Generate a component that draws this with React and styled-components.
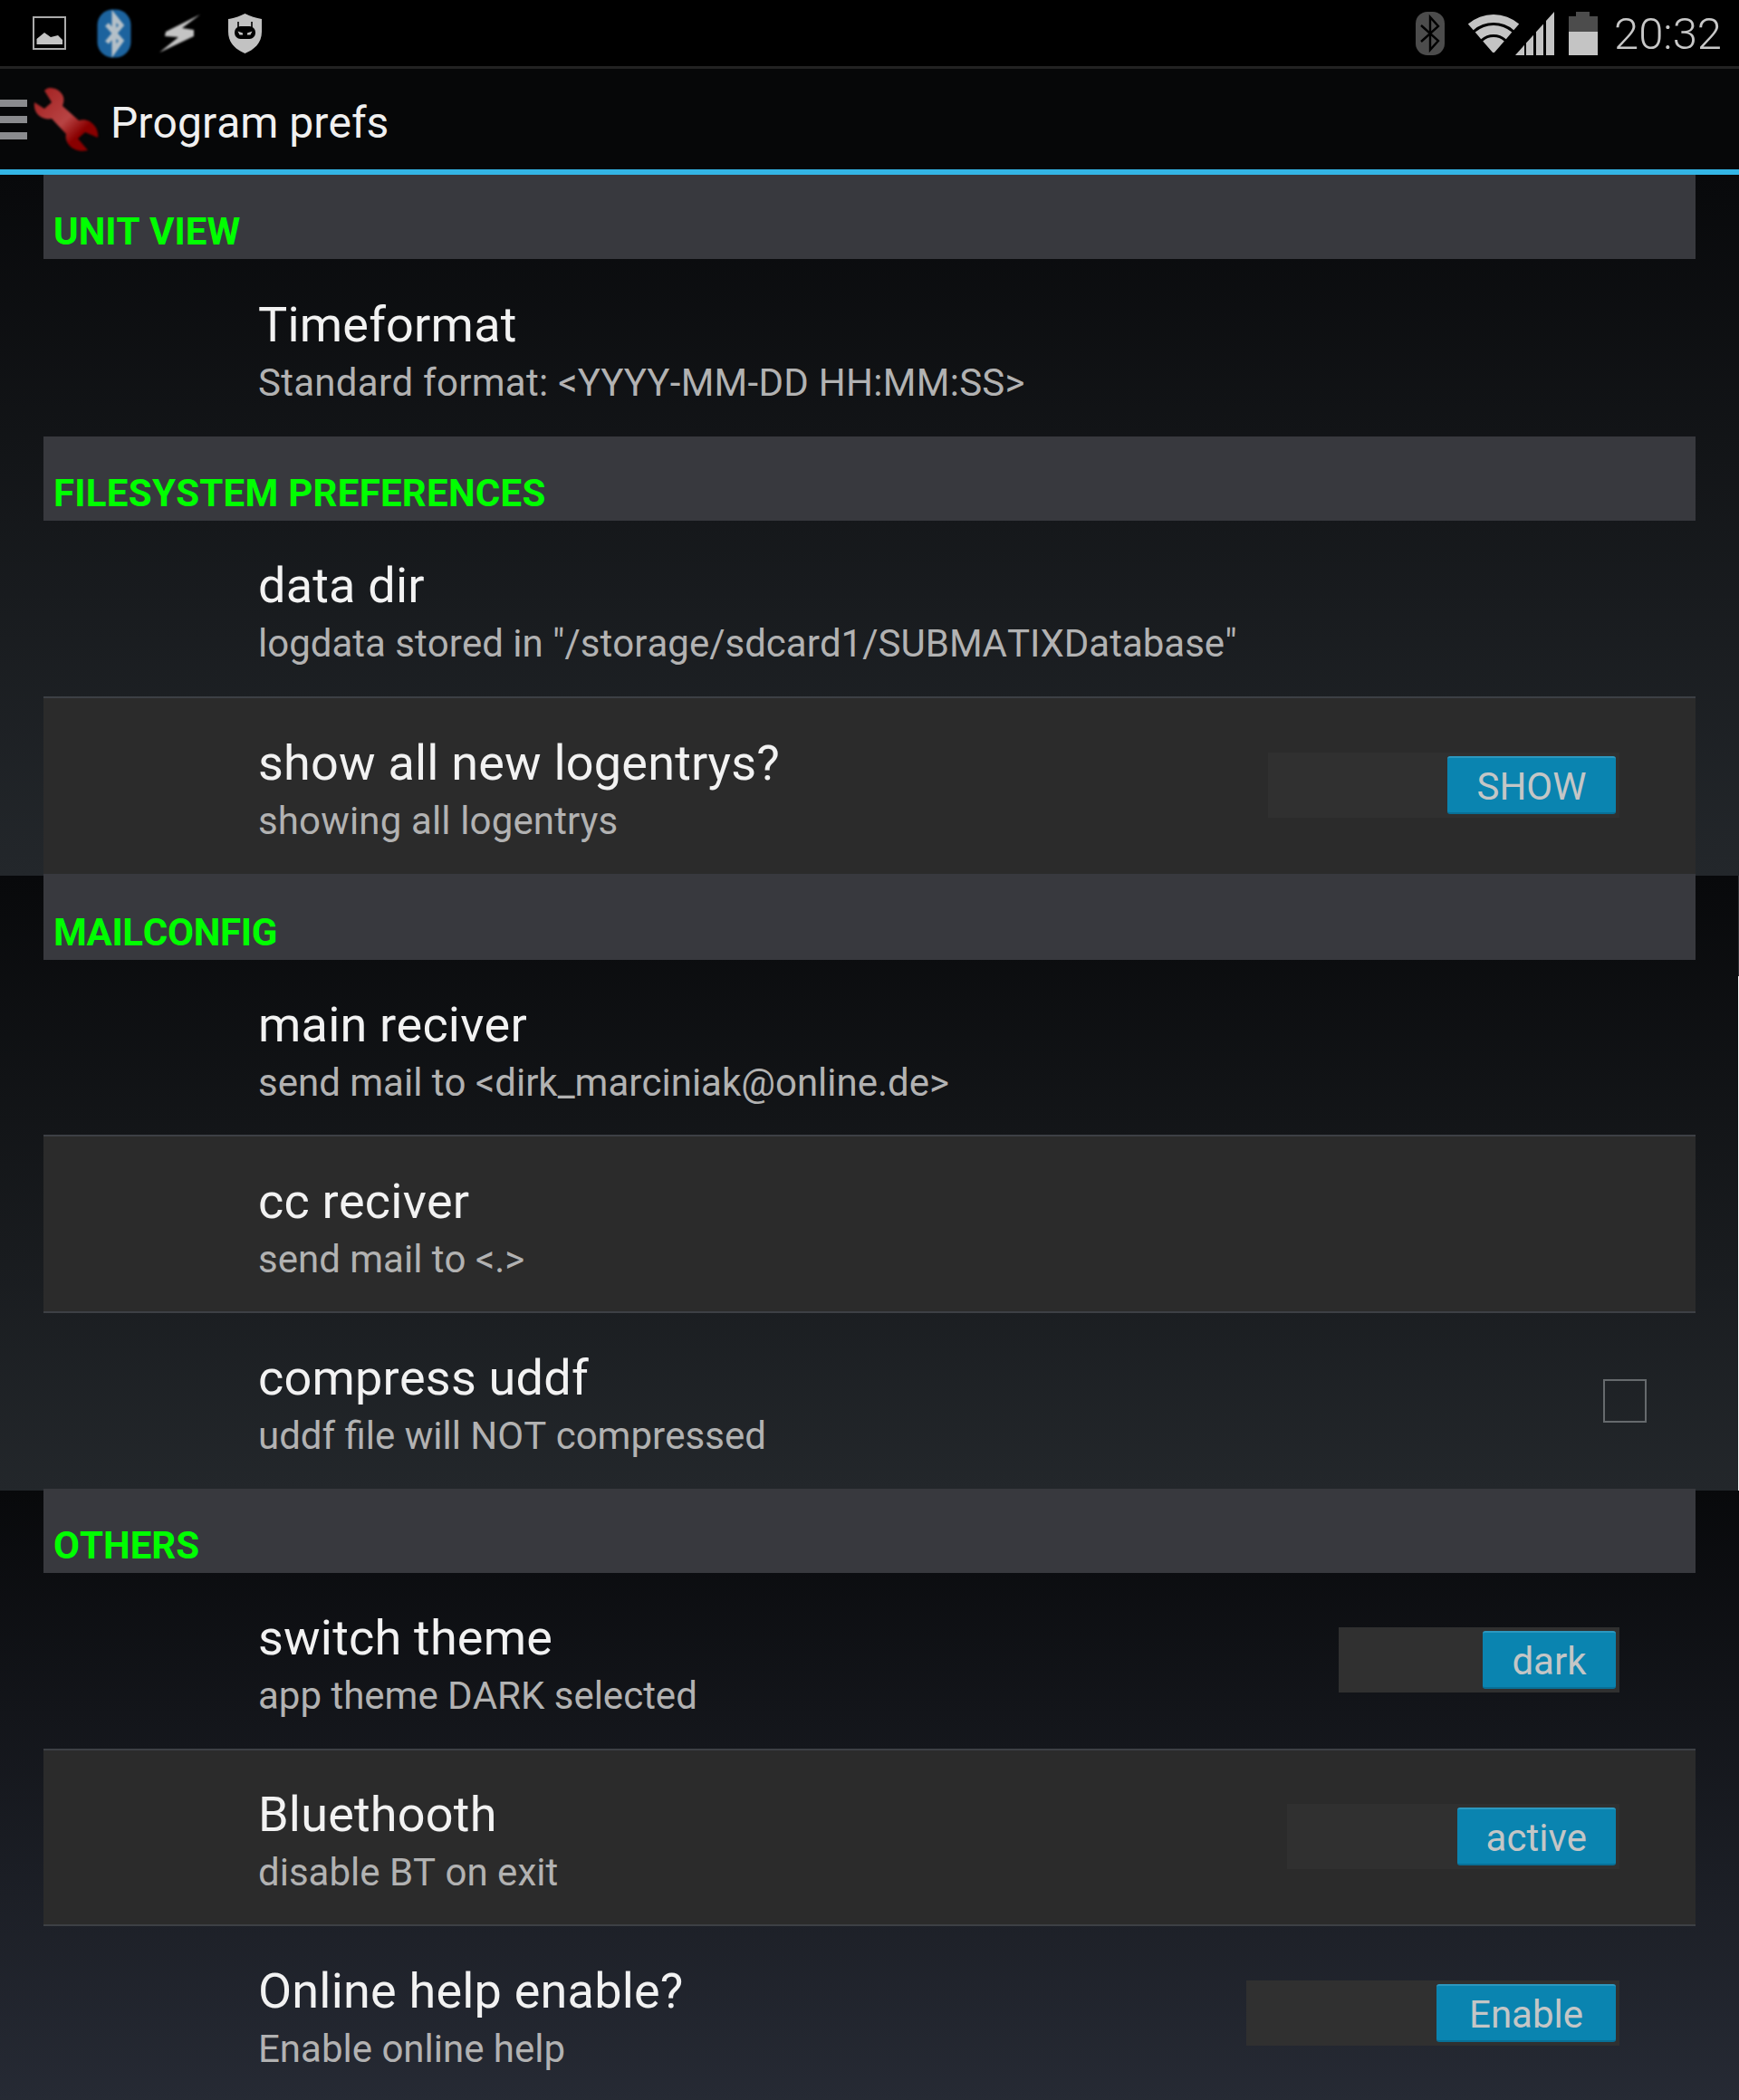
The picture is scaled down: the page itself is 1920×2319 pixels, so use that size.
import React from 'react';
import styled, { createGlobalStyle } from 'styled-components';

const GlobalStyle = createGlobalStyle`
  html, body {
    margin: 0;
    padding: 0;
    background: #000;
  }
  body {
    font-family: Roboto, "Liberation Sans", sans-serif;
    font-kerning: none;
  }
`;

const Page = styled.div`
  width: 1920px;
  height: 2319px;
  overflow: hidden;
  display: flex;
  flex-direction: column;
`;

const StatusBar = styled.div`
  height: 73px;
  background: #000;
  border-bottom: 3px solid #222;
  display: flex;
  align-items: center;
  justify-content: space-between;
  padding: 0 19px 0 18px;
`;

const StatusLeft = styled.div`
  display: flex;
  align-items: center;
`;

const StatusSlot = styled.div`
  width: 72px;
  display: flex;
  justify-content: center;
`;

const StatusRight = styled.div`
  display: flex;
  align-items: center;
`;

const Clock = styled.span`
  margin-left: 18px;
  padding-top: 2px;
  font-size: 49px;
  font-weight: 300;
  color: #c8c8c8;
  line-height: 71px;
`;

const SoftSvg = styled.svg`
  display: block;
  flex: none;
  margin-left: ${p => p.$ml || 0}px;
  filter: ${p => (p.$soft ? `blur(${p.$soft}px)` : 'none')};
`;

const ActionBar = styled.div`
  height: 111px;
  background: #060708;
  border-bottom: 6px solid #33b5e5;
  display: flex;
  align-items: center;
`;

const MenuLines = styled.div`
  width: 30px;
  display: flex;
  flex-direction: column;
  gap: 10px;
  margin-right: 7px;

  span {
    display: block;
    height: 8px;
    background: #8a8b8e;
  }
`;

const ActionTitle = styled.h1`
  margin: 7px 0 0 13px;
  font-size: 48px;
  font-weight: 400;
  color: #f0f0f0;
`;

const Section = styled.section`
  position: relative;
  height: ${p => p.$height}px;
  padding: 0 48px;
  flex: none;
  background: linear-gradient(180deg, #08090b 0%, ${p => p.$end} 100%);

  /* thin leftover strip on the right edge of the capture */
  ${p => p.$edge && `
    &::before {
      content: '';
      position: absolute;
      top: 0;
      right: 0;
      width: 1px;
      height: 111px;
      background: #34363a;
    }
    &::after {
      content: '';
      position: absolute;
      top: 111px;
      right: 0;
      bottom: 0;
      width: 1px;
      background: #f4f4f4;
    }
  `}
`;

const SectionHead = styled.div`
  height: ${p => p.$height || 93}px;
  margin-top: ${p => p.$pull || 0}px;
  box-sizing: border-box;
  background: #38393e;
  padding: 0 0 5px 11px;
  display: flex;
  align-items: flex-end;
  font-size: 42px;
  font-weight: 700;
  line-height: 50px;
  letter-spacing: ${p => p.$track || 0}px;
  color: #00ff00;
`;

const Row = styled.div`
  height: ${p => p.$height || 194}px;
  display: flex;
  align-items: center;
  justify-content: space-between;
  padding: 0 ${p => p.$right}px 0 237px;
  background: ${p => (p.$shaded ? '#2b2b2b' : 'transparent')};
`;

const Divider = styled.div`
  height: 2px;
  background: #3d4045;
`;

const RowText = styled.div`
  display: flex;
  flex-direction: column;
  padding-top: 7px;
`;

const RowTitle = styled.div`
  font-size: 54px;
  line-height: 64px;
  letter-spacing: 0.2px;
  color: #f2f2f2;
`;

const RowSummary = styled.div`
  margin-top: 7px;
  font-size: 42px;
  line-height: 50px;
  letter-spacing: ${p => p.$track || 0}px;
  color: #b2b2b2;
`;

const Track = styled.div`
  display: inline-grid;
  grid-template-columns: 1fr 1fr;
  column-gap: 8px;
  padding: 4px;
  margin-bottom: 2px;
  background: #303030;
`;

const Thumb = styled.div`
  grid-column: 2;
  height: 64px;
  box-sizing: border-box;
  padding: 0 ${p => p.$pad || 32.5}px;
  border-radius: 3px;
  border-top: 2px solid #2c98c0;
  border-bottom: 2px solid #086f96;
  background: #0a84b0;
  color: #c4c6c6;
  font-size: 42px;
  line-height: 63px;
  text-align: center;
  white-space: nowrap;
`;

const Check = styled.div`
  width: 48px;
  height: 48px;
  box-sizing: border-box;
  border: 2px solid #666a6d;
`;

// small helper for the wifi fan, tip at (29, 46)
const fan = (outer, inner) => {
  const a = (41 * Math.PI) / 180;
  const pt = r => [(r * Math.sin(a)).toFixed(1), (r * Math.cos(a)).toFixed(1)];
  const [ox, oy] = pt(outer);
  const [ix, iy] = pt(inner);
  return `M${29 - ox} ${46 - oy}A${outer} ${outer} 0 0 1 ${29 + +ox} ${46 - oy}L${29 + +ix} ${46 - iy}A${inner} ${inner} 0 0 0 ${29 - ix} ${46 - iy}Z`;
};

const PictureIcon = () => (
  <SoftSvg width="37" height="37" viewBox="0 0 37 37">
    <rect x="1" y="1" width="35" height="35" fill="none" stroke="#ababab" strokeWidth="2" />
    <path d="M4.5 31V25L13 18L20 23L28 21L33 26V31Z" fill="#c4c4c4" />
  </SoftSvg>
);

const BlueToothBadge = () => (
  <SoftSvg width="38" height="54" viewBox="0 0 38 54" $soft="1">
    <rect x="0.5" y="0.5" width="37" height="53" rx="17" fill="#1c639e" />
    <path d="M11 17L27 35L19 46V8L27 18L11 37" fill="none" stroke="#b4c0c8" strokeWidth="5" />
  </SoftSvg>
);

const BoltIcon = () => (
  <SoftSvg width="46" height="42" viewBox="0 0 46 42" $soft="0.9">
    <path d="M46 0L8 19L7 24L22 25L1 42L39 24L39 17L26 15Z" fill="#c4c4c4" />
  </SoftSvg>
);

const ShieldIcon = () => (
  <SoftSvg width="37" height="44" viewBox="0 0 37 44">
    <path d="M18.5 0C24 3 31 5 37 6V20C37 33 28 40 18.5 44C9 40 0 33 0 20V6C6 5 13 3 18.5 0Z" fill="#c2c2c2" />
    <path d="M11 9V15M26 9V15" stroke="#000" strokeWidth="1.6" />
    <rect x="7" y="14" width="23" height="14" rx="6.5" fill="#000" />
    <path d="M10.5 19.5L16 21.5V23.5H12.5ZM26.5 19.5L21 21.5V23.5H24.5Z" fill="#c2c2c2" />
  </SoftSvg>
);

const GreyBluetooth = () => (
  <SoftSvg width="32" height="48" viewBox="0 0 32 48">
    <rect width="32" height="48" rx="13" fill="#4c4c4c" />
    <path d="M6 15L25 32L16 42V6L25 16L6 33" fill="none" stroke="#000" strokeWidth="2.4" />
  </SoftSvg>
);

const WifiSignal = () => (
  <SoftSvg width="96" height="48" viewBox="0 0 96 48" $ml={25}>
    <path d={fan(43, 34)} fill="#c4c4c4" />
    <path d={fan(31, 21)} fill="#c4c4c4" />
    <path d={fan(18, 1)} fill="#c4c4c4" />
    <path d="M53 48L63 36.8V48ZM65 34.6L73 25.7V48H65ZM76 22.3L84 13.4V48H76ZM87 10L96 0V48H87Z" fill="#c4c4c4" />
  </SoftSvg>
);

const Battery = () => (
  <SoftSvg width="32" height="48" viewBox="0 0 32 48" $ml={16}>
    <path d="M8 0H23V5H32V22H0V5H8Z" fill="#4c4c4c" />
    <rect y="22" width="32" height="26" fill="#c4c4c4" />
  </SoftSvg>
);

const WrenchIcon = () => (
  <SoftSvg width="72" height="72" viewBox="0 0 72 72" $soft="1">
    <defs>
      <linearGradient id="wrenchFill" x1="0" y1="0" x2="1" y2="1">
        <stop offset="0" stopColor="#a01c1c" />
        <stop offset="0.5" stopColor="#b84444" />
        <stop offset="0.72" stopColor="#8a0000" />
        <stop offset="1" stopColor="#860000" />
      </linearGradient>
    </defs>
    <path
      d="M18 1C25 1 31 5 33 11C34 15 33 18 32 21L50 37C54 36 58 36 62 38C68 42 72 48 71 56L57 50L49 57L60 70C52 72 44 70 39 64C36 60 35 56 36 52L20 35C16 36 11 35 8 33C3 30 0 24 1 17L12 24L20 17L12 4C14 2 16 1 18 1Z"
      fill="url(#wrenchFill)"
    />
  </SoftSvg>
);

const Setting = ({ title, summary, track, shaded, height, right, children }) => (
  <Row $shaded={shaded} $height={height} $right={right || 84}>
    <RowText>
      <RowTitle>{title}</RowTitle>
      <RowSummary $track={track}>{summary}</RowSummary>
    </RowText>
    {children}
  </Row>
);

const Toggle = ({ label, pad }) => (
  <Track>
    <Thumb $pad={pad}>{label}</Thumb>
  </Track>
);

export default function App() {
  return (
    <Page>
      <GlobalStyle />
      <StatusBar>
        <StatusLeft>
          <StatusSlot><PictureIcon /></StatusSlot>
          <StatusSlot><BlueToothBadge /></StatusSlot>
          <StatusSlot><BoltIcon /></StatusSlot>
          <StatusSlot><ShieldIcon /></StatusSlot>
        </StatusLeft>
        <StatusRight>
          <GreyBluetooth />
          <WifiSignal />
          <Battery />
          <Clock>20:32</Clock>
        </StatusRight>
      </StatusBar>
      <ActionBar>
        <MenuLines><span /><span /><span /></MenuLines>
        <WrenchIcon />
        <ActionTitle>Program prefs</ActionTitle>
      </ActionBar>

      <Section $height={774} $end="#23272b">
        <SectionHead>UNIT VIEW</SectionHead>
        <Setting title="Timeformat" summary="Standard format: <YYYY-MM-DD HH:MM:SS>" track={0.28} height={196} />
        <SectionHead $track={0.27}>FILESYSTEM PREFERENCES</SectionHead>
        <Setting title="data dir" summary={'logdata stored in "/storage/sdcard1/SUBMATIXDatabase"'} />
        <Divider />
        <Setting title="show all new logentrys?" summary="showing all logentrys" track={0.15} shaded>
          <Toggle label="SHOW" />
        </Setting>
      </Section>

      <Section $height={679} $end="#23272b" $edge>
        <SectionHead $height={95} $pull={-2} $track={-0.3}>MAILCONFIG</SectionHead>
        <Setting title="main reciver" summary="send mail to <dirk_marciniak@online.de>" height={193} />
        <Divider />
        <Setting title="cc reciver" summary="send mail to <.>" shaded height={193} />
        <Divider />
        <Setting title="compress uddf" summary="uddf file will NOT compressed" right={54}>
          <Check />
        </Setting>
      </Section>

      <Section $height={673} $end="#262a34">
        <SectionHead $pull={-2}>OTHERS</SectionHead>
        <Setting title="switch theme" summary="app theme DARK selected">
          <Toggle label="dark" />
        </Setting>
        <Divider />
        <Setting title="Bluethooth" summary="disable BT on exit" shaded height={192}>
          <Toggle label="active" pad={32} />
        </Setting>
        <Divider />
        <Setting title="Online help enable?" summary="Enable online help">
          <Toggle label="Enable" pad={36} />
        </Setting>
      </Section>
    </Page>
  );
}
